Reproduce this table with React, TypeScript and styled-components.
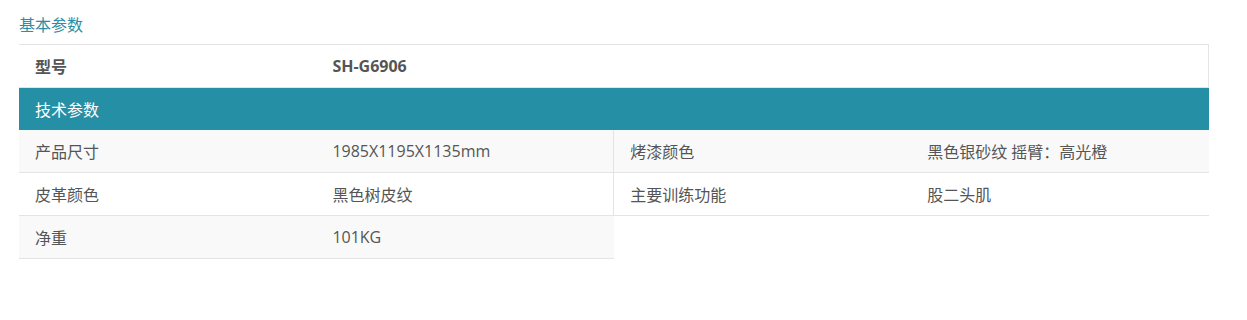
import { Fragment } from "react";
import styled, { createGlobalStyle } from "styled-components";

const GlobalStyle = createGlobalStyle`
  body {
    margin: 0;
    background: #fff;
    font-family: "Open Sans", "Noto Sans CJK SC", sans-serif;
  }
`;

interface Spec {
  label: string;
  value: string;
}

const model = { label: "型号", value: "SH-G6906" };

// pairs of specs shown two per row
const techRows: Spec[][] = [
  [
    { label: "产品尺寸", value: "1985X1195X1135mm" },
    { label: "烤漆颜色", value: "黑色银砂纹 摇臂：高光橙" },
  ],
  [
    { label: "皮革颜色", value: "黑色树皮纹" },
    { label: "主要训练功能", value: "股二头肌" },
  ],
  [{ label: "净重", value: "101KG" }],
];

export default function App() {
  return (
    <>
      <GlobalStyle />
      <Section>
        <Title>基本参数</Title>
        <SpecTable>
          <colgroup>
            <col />
            <col />
            <col />
            <col />
          </colgroup>
          <tbody>
            <ModelRow>
              <Cell>{model.label}</Cell>
              <Cell colSpan={3}>{model.value}</Cell>
            </ModelRow>
            <HeadRow>
              <Cell colSpan={4}>技术参数</Cell>
            </HeadRow>
            {techRows.map((row, i) => (
              <DataRow key={i} $striped={i % 2 === 0}>
                {row.map((spec, j) => (
                  <Fragment key={j}>
                    <Cell $divided={j > 0}>{spec.label}</Cell>
                    <Cell>{spec.value}</Cell>
                  </Fragment>
                ))}
              </DataRow>
            ))}
          </tbody>
        </SpecTable>
      </Section>
    </>
  );
}

const Section = styled.div`
  padding: 14px 0 0 19px;
  width: 1190px;
`;

const Title = styled.div`
  font-size: 16px;
  line-height: 22px;
  color: #2a8ea4;
  margin-bottom: 8px;
`;

const SpecTable = styled.table`
  width: 1190px;
  border-collapse: collapse;
  table-layout: fixed;
  font-size: 16px;
  color: #555;

  col {
    width: 25%;
  }
`;

const Cell = styled.td<{ $divided?: boolean }>`
  height: 42px;
  padding: 0 16px;
  vertical-align: middle;
  white-space: nowrap;
  border-left: ${(p) => (p.$divided ? "1px solid #e4e4e4" : "none")};
`;

const ModelRow = styled.tr`
  border-top: 1px solid #e4e4e4;
  border-right: 1px solid #e4e4e4;
  border-bottom: 1px solid #e4e4e4;
  font-weight: 700;
  background: #fff;
`;

const HeadRow = styled.tr`
  background: #258fa6;
  color: #fff;
`;

const DataRow = styled.tr<{ $striped: boolean }>`
  td {
    background: ${(p) => (p.$striped ? "#f9f9f9" : "#fff")};
    border-bottom: 1px solid #e4e4e4;
  }
`;
